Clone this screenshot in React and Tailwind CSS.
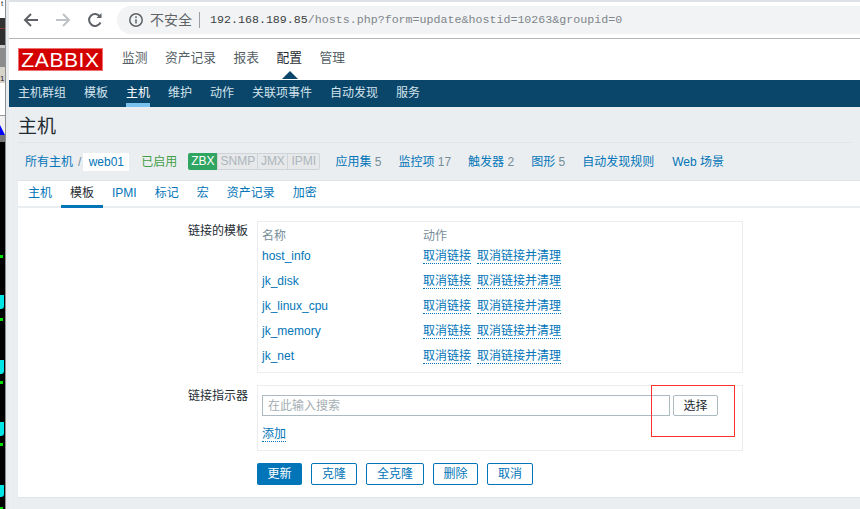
import React from 'react';

const FONT = "font-['Liberation_Sans','Noto_Sans_CJK_SC',sans-serif]";

const Strip = () => (
  <div className="w-[5px] h-[509px] flex flex-col bg-black shrink-0 overflow-hidden">
    <div className="h-[18px] bg-white shrink-0 text-[8px] leading-[8px] pl-px text-[#333333]">t</div>
    <div className="h-[10px] bg-[#333333] shrink-0"></div>
    <div className="h-px bg-[#8a3a3a] shrink-0"></div>
    <div className="h-[16px] bg-[#2e2e2e] shrink-0"></div>
    <div className="h-[3px] bg-[#c9c9c9] shrink-0"></div>
    <div className="h-[19px] bg-[#8c8c8c] shrink-0"></div>
    <div className="h-[16px] bg-[#d6d3cb] shrink-0 text-[8px] leading-[8px] pt-[8px] text-[#222222]">1</div>
    <div className="h-[32px] bg-white shrink-0"></div>
    <div className="h-[1px] bg-[#999999] shrink-0"></div>
    <div className="h-[19px] bg-[#f0f0f0] shrink-0 flex items-end">
      <svg width="5" height="10" viewBox="0 0 5 10"><path d="M0 0L5 10H0Z" fill="#0000ff" /></svg>
    </div>
    <div className="h-[7px] bg-[#777777] shrink-0"></div>
    {/* terminal text peeking out from behind the browser window */}
    <div className="h-[3px] w-[3px] mt-[113px] bg-[#00e000] shrink-0"></div>
    <div className="h-[14px] w-[4px] mt-[37px] bg-[#00e5e5] rounded-br-[3px] shrink-0"></div>
    <div className="h-[3px] w-[3px] mt-[9px] bg-[#00e000] shrink-0"></div>
    <div className="h-[14px] w-[4px] mt-[39px] bg-[#00e5e5] rounded-br-[3px] shrink-0"></div>
    <div className="h-[3px] w-[3px] mt-[7px] bg-[#00e000] shrink-0"></div>
    <div className="h-[14px] w-[4px] mt-[38px] bg-[#00e5e5] rounded-br-[3px] shrink-0"></div>
    <div className="h-[3px] w-[3px] mt-[7px] bg-[#00e000] shrink-0"></div>
    <div className="h-[12px] w-[4px] mt-[39px] bg-[#00e5e5] rounded-br-[3px] shrink-0"></div>
    <div className="h-[2px] w-[3px] mt-[10px] bg-[#00e000] shrink-0"></div>
  </div>
);

const Logo = () => (
  <div className="w-[85px] h-[23px] bg-[#d40000] border border-[#f07070] flex items-center justify-center text-white text-[21px] leading-none font-['Liberation_Sans',sans-serif] tracking-[0.6px]">
    ZABBIX
  </div>
);

const Link = ({ children, className = '' }) => (
  <span className={`text-[#0275b8] border-b border-dotted border-[#0275b8] leading-[14px] ${className}`}>{children}</span>
);

const templates = ['host_info', 'jk_disk', 'jk_linux_cpu', 'jk_memory', 'jk_net'];

const Btn = ({ children, w }) => (
  <button className={`h-[22px] ${w} border border-[#0275b8] rounded-[2px] bg-white text-[#0275b8] text-[12px] flex items-center justify-center`}>
    {children}
  </button>
);

const App = () => {
  return (
    <div className={`relative w-[860px] h-[509px] overflow-hidden flex bg-white text-[12px] ${FONT}`}>
      <Strip />
      <div className="w-[4px] h-full bg-[#e8ebed] border-l border-[#8f8f8f] shrink-0"></div>

      <div className="flex-1 min-w-0 flex flex-col">
        {/* Browser chrome */}
        <div className="h-[2px] bg-[#dee1e6]"></div>
        <div className="h-[36px] border-b border-[#b5b5b5] flex items-center box-content bg-white">
          <div className="w-[108px] flex items-center shrink-0 pl-[14px] gap-[16px] h-full">
            <svg width="16" height="16" viewBox="0 0 16 16" fill="none" stroke="#5f6368" strokeWidth="2"><path d="M15 8H2M8 2L2 8l6 6" /></svg>
            <svg width="16" height="16" viewBox="0 0 16 16" fill="none" stroke="#bfc2c6" strokeWidth="2"><path d="M1 8h13M8 2l6 6-6 6" /></svg>
            <svg width="16" height="16" viewBox="0 0 16 16" fill="none" stroke="#5f6368" strokeWidth="2"><path d="M13.5 10.5A6 6 0 1 1 13 4.5" /><path d="M14.5 1v5h-5" fill="#5f6368" stroke="none" /></svg>
          </div>
          <div className="flex-1 h-[28px] bg-[#f1f3f4] rounded-l-[14px] flex items-center pl-[11px] min-w-0">
            <svg width="16" height="16" viewBox="0 0 16 16" fill="none" stroke="#5f6368" strokeWidth="1.5" className="shrink-0">
              <circle cx="8" cy="8" r="6.2" /><path d="M8 7.2v4.2M8 4.3v1.6" />
            </svg>
            <span className="ml-[6px] text-[14px] text-[#5f6368] leading-none">不安全</span>
            <span className="ml-[7px] w-px h-[16px] bg-[#9aa0a6]"></span>
            <span className="ml-[10px] font-['Liberation_Mono',monospace] text-[11.65px] text-[#80868b] whitespace-nowrap">
              <span className="text-[#3c4043]">192.168.189.85</span>/hosts.php?form=update&amp;hostid=10263&amp;groupid=0
            </span>
          </div>
        </div>

        {/* Top menu */}
        <div className="h-[41px] flex items-start pl-[9px] bg-white shrink-0">
          <div className="mt-[9px]"><Logo /></div>
          <nav className="ml-[19px] mt-[9px] flex gap-[17.5px] text-[12.75px] text-[#555f66] leading-[20px]">
            <span>监测</span>
            <span>资产记录</span>
            <span>报表</span>
            <span className="relative text-[#1f2c33]">
              配置
              <span className="absolute left-[5px] top-[23px] w-0 h-0 border-x-[8px] border-x-transparent border-b-[8px] border-b-[#0a466a]"></span>
            </span>
            <span>管理</span>
          </nav>
        </div>

        {/* Sub menu */}
        <div className="h-[27px] bg-[#0a466a] flex pl-[9px] gap-[18px] text-[12px] text-[#d3e3ec] shrink-0">
          {['主机群组', '模板', '主机', '维护', '动作', '关联项事件', '自动发现', '服务'].map((item) => (
            <span
              key={item}
              className={`h-[27px] leading-[26px] whitespace-nowrap ${item === '主机' ? 'text-white border-b-[4px] border-[#7bc1ee]' : ''}`}
            >
              {item}
            </span>
          ))}
        </div>

        {/* Page */}
        <div className="flex-1 bg-[#ebeef0] px-[9px] min-h-0 flex flex-col">
          <div className="h-[36px] border-b border-[#dfe4e7] text-[19px] text-[#1f2c33] leading-[40px] shrink-0">主机</div>

          <div className="h-[38px] border-b border-[#dfe4e7] flex items-center text-[12px] -mr-[9px] shrink-0">
            <span className="ml-[7px] text-[#0275b8]">所有主机</span>
            <span className="ml-[5px] text-[#768d99]">/</span>
            <span className="ml-[2px] h-[18px] w-[46px] bg-white text-[#0275b8] flex items-center justify-center">web01</span>
            <span className="ml-[12px] text-[#429e47]">已启用</span>
            <div className="ml-[11px] flex h-[17px] text-[12px] leading-[17px]">
              <span className="w-[29px] bg-[#2fa561] text-white text-center rounded-l-[2px]">ZBX</span>
              <span className="w-[41px] bg-[#e6e8ea] text-[#acb6bc] text-center border border-[#ced4d8] leading-[15px]">SNMP</span>
              <span className="w-[30px] bg-[#e6e8ea] text-[#acb6bc] text-center border-y border-r border-[#ced4d8] leading-[15px]">JMX</span>
              <span className="w-[32px] bg-[#e6e8ea] text-[#acb6bc] text-center border-y border-r border-[#ced4d8] leading-[15px] rounded-r-[2px]">IPMI</span>
            </div>
            <span className="ml-[15px] text-[#0275b8]">应用集 <span className="text-[#768d99]">5</span></span>
            <span className="ml-[17px] text-[#0275b8]">监控项 <span className="text-[#768d99]">17</span></span>
            <span className="ml-[17px] text-[#0275b8]">触发器 <span className="text-[#768d99]">2</span></span>
            <span className="ml-[17px] text-[#0275b8]">图形 <span className="text-[#768d99]">5</span></span>
            <span className="ml-[17px] text-[#0275b8]">自动发现规则</span>
            <span className="ml-[18px] text-[#0275b8]">Web 场景</span>
          </div>

          {/* Panel */}
          <div className="h-[317px] bg-white -mr-[9px] border-b border-[#dfe4e7] shrink-0 flex flex-col">
            <div className="h-[27px] border-b-2 border-[#ebeef0] flex pl-[10px] gap-[18px] text-[#0275b8] shrink-0">
              {['主机', '模板', 'IPMI', '标记', '宏', '资产记录', '加密'].map((tab) => (
                <span
                  key={tab}
                  className={`h-[27px] leading-[24px] ${tab === '模板' ? 'text-[#1f2c33] border-b-[3px] border-[#0275b8] -mx-[9px] px-[9px]' : ''}`}
                >
                  {tab}
                </span>
              ))}
            </div>

            <div className="flex mt-[13px]">
              <div className="w-[239px] pr-[9px] text-right text-[#1f2c33] leading-[18px] pt-px shrink-0">链接的模板</div>
              <div className="w-[486px] h-[152px] border border-[#ebeef0] px-[4px] pt-[5px] shrink-0">
                <div className="flex text-[#768d99] leading-[18px] -mb-[2px]">
                  <span className="w-[161px]">名称</span>
                  <span>动作</span>
                </div>
                {templates.map((name) => (
                  <div key={name} className="flex h-[25px] items-center">
                    <span className="w-[161px] text-[#0275b8]">{name}</span>
                    <Link className="mt-[2px]">取消链接</Link>
                    <Link className="mt-[2px] ml-[6px]">取消链接并清理</Link>
                  </div>
                ))}
              </div>
            </div>

            <div className="flex mt-[12px]">
              <div className="w-[239px] pr-[9px] text-right text-[#1f2c33] leading-[18px] pt-[2px] shrink-0">链接指示器</div>
              <div className="w-[486px] h-[66px] border border-[#ebeef0] px-[4px] pt-[9px] shrink-0">
                <div className="flex gap-[3px]">
                  <div className="w-[408px] h-[21px] border border-[#acbbc2] pl-[5px] text-[#a5aeb3] leading-[21px]">在此输入搜索</div>
                  <button className="w-[45px] h-[21px] border border-[#acbbc2] rounded-[2px] text-[#1f2c33] text-[12px] flex items-center justify-center">选择</button>
                </div>
                <div className="mt-[11px] flex"><Link>添加</Link></div>
              </div>
            </div>

            <div className="flex mt-[12px] ml-[239px] gap-[9px]">
              <button className="h-[22px] w-[45px] bg-[#0275b8] rounded-[2px] text-white text-[12px] flex items-center justify-center">更新</button>
              <Btn w="w-[46px]">克隆</Btn>
              <Btn w="w-[58px]">全克隆</Btn>
              <Btn w="w-[45px]">删除</Btn>
              <Btn w="w-[46px]">取消</Btn>
            </div>
          </div>
        </div>
      </div>

      {/* Red annotation box drawn over the screenshot */}
      <div className="absolute left-[651px] top-[385px] w-[84px] h-[52px] border border-[#ff3030]"></div>
    </div>
  );
};

export default App;
